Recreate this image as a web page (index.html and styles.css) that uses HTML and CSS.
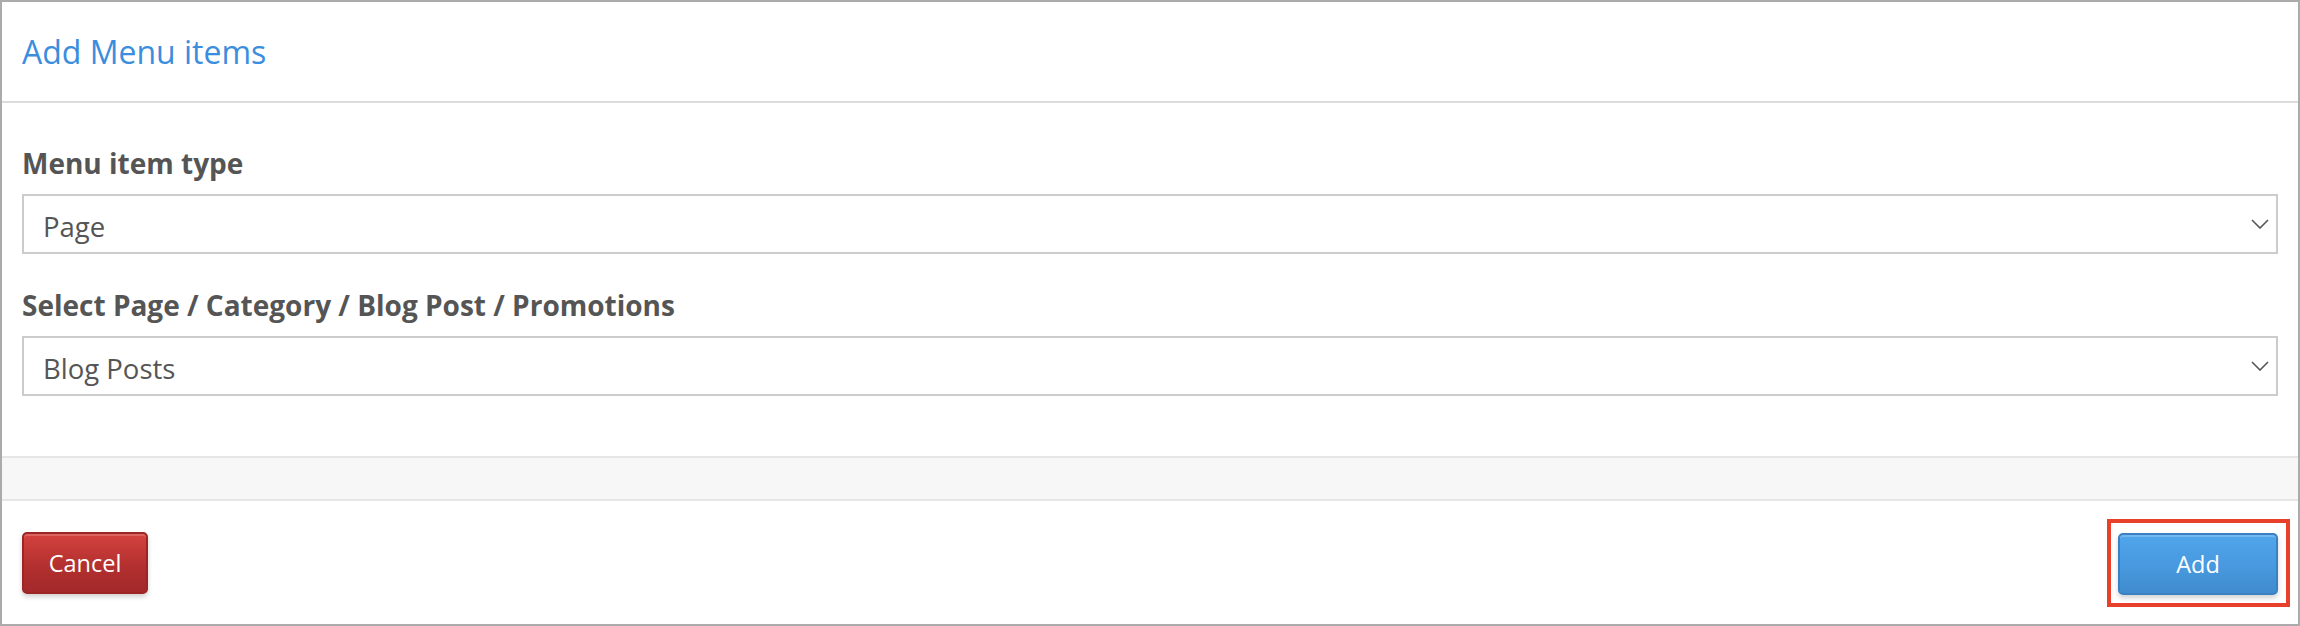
FILE: index.html
```html
<!DOCTYPE html>
<html lang="en">
<head>
<meta charset="utf-8">
<title>Add Menu items</title>
<link rel="stylesheet" href="styles.css">
</head>
<body>
<div class="modal">
  <div class="modal-header">
    <h1 class="modal-title">Add Menu items</h1>
  </div>
  <div class="modal-body">
    <div class="form-group">
      <label class="form-label">Menu item type</label>
      <div class="select">
        <span class="select-value">Page</span>
        <svg class="chevron" width="18" height="10" viewBox="0 0 18 10"><polyline points="1,1 9,9 17,1" fill="none" stroke="#555" stroke-width="1.6"/></svg>
      </div>
    </div>
    <div class="form-group">
      <label class="form-label">Select Page / Category / Blog Post / Promotions</label>
      <div class="select">
        <span class="select-value">Blog Posts</span>
        <svg class="chevron" width="18" height="10" viewBox="0 0 18 10"><polyline points="1,1 9,9 17,1" fill="none" stroke="#555" stroke-width="1.6"/></svg>
      </div>
    </div>
  </div>
  <div class="modal-band"></div>
  <div class="modal-footer">
    <button class="btn btn-cancel">Cancel</button>
    <span class="highlight"><button class="btn btn-add">Add</button></span>
  </div>
</div>
</body>
</html>
```

FILE: styles.css
```css
* { box-sizing: border-box; }
html, body { margin: 0; padding: 0; background: #fff; }
body { font-family: "Open Sans", "Liberation Sans", sans-serif; }

.modal {
  width: 2300px;
  height: 626px;
  border: 2px solid #ababab;
  background: #fff;
  display: flex;
  flex-direction: column;
}

.modal-header {
  padding: 28px 20px 27px;
  border-bottom: 2px solid #dcdcdc;
}
.modal-title {
  margin: 0;
  font-size: 32px;
  line-height: 44px;
  font-weight: 400;
  color: #3b8ddd;
}

.modal-body {
  padding: 42px 20px 0;
  height: 353px;
}
.form-group { margin-bottom: 33px; }
.form-group:last-child { margin-bottom: 0; }
.form-label {
  display: block;
  font-size: 28px;
  line-height: 36px;
  font-weight: 700;
  color: #555;
  margin-bottom: 13px;
}
.select {
  height: 60px;
  border: 2px solid #cccccc;
  background: #fff;
  display: flex;
  align-items: center;
  justify-content: space-between;
  padding: 0 7px 0 19px;
}
.select-value {
  font-size: 27.5px;
  line-height: 37px;
  color: #555;
  padding-top: 4px;
}
.chevron { display: block; }

.modal-band {
  height: 45px;
  background: #f7f7f7;
  border-top: 2px solid #e6e6e6;
  border-bottom: 2px solid #e6e6e6;
}

.modal-footer {
  flex: 1;
  display: flex;
  justify-content: space-between;
  align-items: center;
  padding: 0 8px 0 20px;
}

.highlight {
  display: flex;
  border: 4px solid #e8402a;
  padding: 10px 8px 8px 7px;
}

.btn {
  height: 62px;
  font-family: "Open Sans", "Liberation Sans", sans-serif;
  font-size: 23.5px;
  color: #fff;
  border-radius: 5px;
  cursor: pointer;
  padding: 0;
}
.btn-cancel {
  width: 126px;
  border: 2px solid #9d2526;
  background: linear-gradient(#d4423f, #b3302f 55%, #a3282a);
  box-shadow: inset 0 2px 0 rgba(255,255,255,0.18), 0 3px 5px rgba(0,0,0,0.18);
}
.btn-add {
  width: 160px;
  border: 2px solid #3b80c2;
  background: linear-gradient(#50a5eb, #4899df 55%, #3f8bcd);
  box-shadow: inset 0 2px 0 rgba(255,255,255,0.2), 0 3px 5px rgba(0,0,0,0.18);
}
```
